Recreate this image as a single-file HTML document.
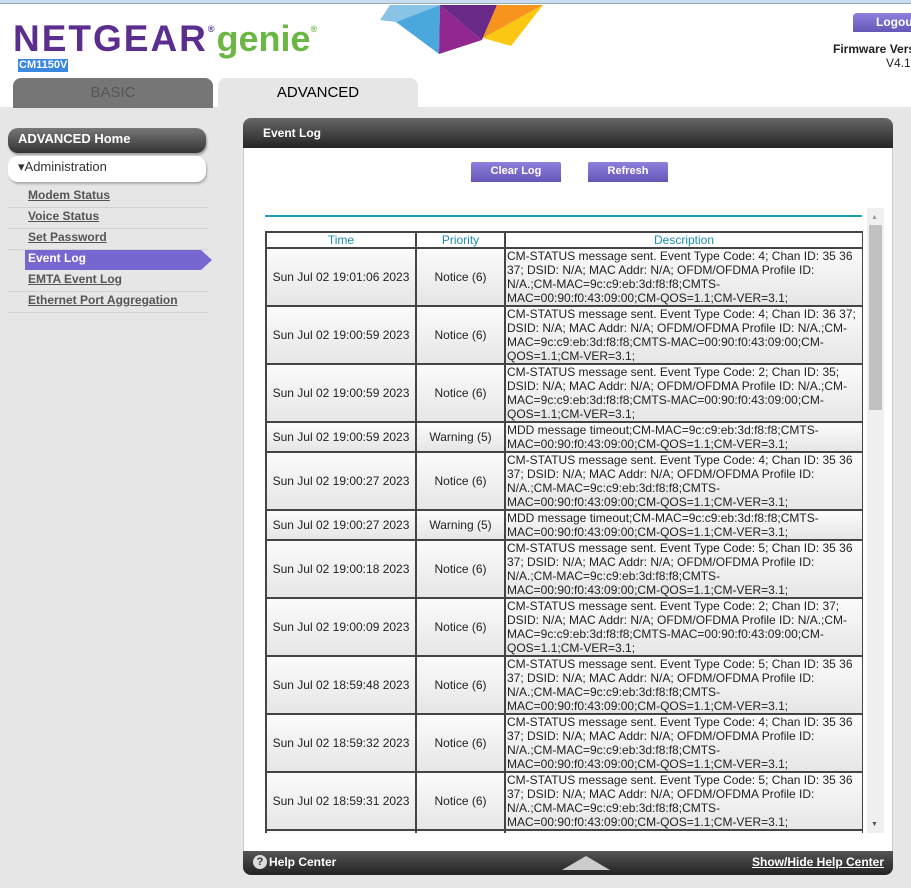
<!DOCTYPE html>
<html><head><meta charset="utf-8"><style>
*{margin:0;padding:0;box-sizing:border-box}
body{width:911px;height:888px;overflow:hidden;background:#e6e6e6;font-family:"Liberation Sans",Arial,sans-serif;position:relative;color:#222}
.abs{position:absolute}
#hdr{left:0;top:0;width:911px;height:107px;background:#fff}
#topbar{left:0;top:0;width:911px;height:4px;background:#c8dcf2;border-bottom:1px solid #9aa}
.logo{left:13px;top:18px;font-size:37px;font-weight:bold;color:#5b2d8e;letter-spacing:2px;white-space:nowrap}
.logo span{color:#6ab744;letter-spacing:0;font-size:36px;margin-left:2px}
.logo sup{font-size:9px;vertical-align:top;position:relative;top:6px;letter-spacing:0}
.model{left:18px;top:59px;font-size:11px;font-weight:bold;background:#3b88e0;color:#fff;padding:0 1px;line-height:13px}
.tab{top:78px;height:30px;border-radius:8px 8px 0 0;text-align:center;font-size:15px;line-height:30px}
.nav{left:8px;width:198px;border-radius:10px;font-size:13px}
.link{left:28px;font-size:12px;font-weight:bold;color:#555;text-decoration:underline}
.sep{left:8px;width:200px;height:1px;background:#d2d2d2}
.btn{top:162px;height:20px;background:linear-gradient(#8d80dc,#6356b8);color:#fff;font-size:11px;font-weight:bold;text-align:center;line-height:19px;border-radius:2px 2px 0 0}
table{border-collapse:collapse;width:597px;font-size:12px;table-layout:fixed}
td,th{border:2px solid #444;line-height:14px;padding:0 1px;white-space:nowrap}
th{color:#1e8fb0;font-weight:normal;height:16px;background:#fff;line-height:12px}
td{background:linear-gradient(#fbfbfb,#e6e6e6)}
td.c{text-align:center}
</style></head><body>
<div id="hdr" class="abs"></div>
<div id="topbar" class="abs"></div>
<svg class="abs" style="left:0;top:0" width="911" height="60">
<polygon points="390,5 440,5 396,22 380,20" fill="#89c4e6"/>
<polygon points="396,22 440,5 439,54" fill="#4aa8dc"/>
<polygon points="440,5 439,54 482,40" fill="#92278f"/>
<polygon points="440,5 497,5 482,40" fill="#682a86"/>
<polygon points="497,5 543,5 483,38" fill="#f7941d"/>
<polygon points="483,38 543,5 511,46" fill="#fcc712"/>
</svg>
<div class="abs logo">NETGEAR<sup>®</sup><span>genie<sup>®</sup></span></div>
<div class="abs model">CM1150V</div>
<div class="abs" style="left:853px;top:13px;width:70px;height:19px;background:linear-gradient(#8d80dc,#6356b8);border-radius:4px 0 0 0;color:#fff;font-size:12px;font-weight:bold;line-height:18px;padding-left:23px">Logout</div>
<div class="abs" style="left:833px;top:42px;font-size:12px;font-weight:bold;white-space:nowrap">Firmware Version</div>
<div class="abs" style="left:886px;top:56px;font-size:12px;white-space:nowrap">V4.12</div>
<div class="abs tab" style="left:13px;width:200px;background:#767676;color:#555">BASIC</div>
<div class="abs tab" style="left:218px;width:200px;background:#e6e6e6;color:#000">ADVANCED</div>

<div class="abs nav" style="top:128px;height:25px;background:linear-gradient(#777,#333);color:#fff;font-weight:bold;line-height:22px;padding-left:10px;box-shadow:1px 2px 2px #999">ADVANCED Home</div>
<div class="abs nav" style="top:156px;height:26px;background:#fff;color:#333;line-height:22px;padding-left:10px;box-shadow:1px 2px 2px #aaa">▾Administration</div>
<div class="abs" style="left:25px;top:250px;width:176px;height:20px;background:#7667d0"></div>
<div class="abs" style="left:201px;top:250px;width:0;height:0;border-top:10px solid transparent;border-bottom:10px solid transparent;border-left:11px solid #7667d0"></div>
<div class="abs link" style="top:188px">Modem Status</div>
<div class="abs sep" style="top:207px"></div>
<div class="abs link" style="top:209px">Voice Status</div>
<div class="abs sep" style="top:228px"></div>
<div class="abs link" style="top:230px">Set Password</div>
<div class="abs sep" style="top:249px"></div>
<div class="abs link" style="top:251px;color:#fff;text-decoration:none">Event Log</div>
<div class="abs link" style="top:272px">EMTA Event Log</div>
<div class="abs sep" style="top:291px"></div>
<div class="abs link" style="top:293px">Ethernet Port Aggregation</div>
<div class="abs sep" style="top:312px"></div>

<div class="abs" style="left:243px;top:118px;width:650px;height:31px;background:linear-gradient(#666,#222);border-radius:8px 8px 0 0;color:#fff;font-size:12px;font-weight:bold;padding:8px 0 0 20px">Event Log</div>
<div class="abs" style="left:243px;top:148px;width:650px;height:703px;background:#fff;border-left:1px solid #ccc;border-right:1px solid #ccc"></div>
<div class="abs btn" style="left:471px;width:90px">Clear Log</div>
<div class="abs btn" style="left:588px;width:80px">Refresh</div>
<div class="abs" style="left:265px;top:215px;width:597px;height:2px;background:#1a9bbb"></div>
<div class="abs" style="left:867px;top:208px;width:17px;height:625px;background:#f0f0f0"></div>
<div class="abs" style="left:869px;top:225px;width:13px;height:185px;background:#c1c1c1"></div>
<div class="abs" style="left:871px;top:214px;font-size:7px;color:#999">▲</div>
<div class="abs" style="left:871px;top:821px;font-size:7px;color:#555">▼</div>

<div class="abs" style="left:265px;top:231px;width:598px;height:602px;overflow:hidden">
<table>
<colgroup><col style="width:150px"><col style="width:89px"><col style="width:358px"></colgroup>
<tr><th>Time</th><th>Priority</th><th>Description</th></tr>
<tr><td class="c">Sun Jul 02 19:01:06 2023</td><td class="c">Notice (6)</td><td>CM-STATUS message sent. Event Type Code: 4; Chan ID: 35 36<br>37; DSID: N/A; MAC Addr: N/A; OFDM/OFDMA Profile ID:<br>N/A.;CM-MAC=9c:c9:eb:3d:f8:f8;CMTS-<br>MAC=00:90:f0:43:09:00;CM-QOS=1.1;CM-VER=3.1;</td></tr>
<tr><td class="c">Sun Jul 02 19:00:59 2023</td><td class="c">Notice (6)</td><td>CM-STATUS message sent. Event Type Code: 4; Chan ID: 36 37;<br>DSID: N/A; MAC Addr: N/A; OFDM/OFDMA Profile ID: N/A.;CM-<br>MAC=9c:c9:eb:3d:f8:f8;CMTS-MAC=00:90:f0:43:09:00;CM-<br>QOS=1.1;CM-VER=3.1;</td></tr>
<tr><td class="c">Sun Jul 02 19:00:59 2023</td><td class="c">Notice (6)</td><td>CM-STATUS message sent. Event Type Code: 2; Chan ID: 35;<br>DSID: N/A; MAC Addr: N/A; OFDM/OFDMA Profile ID: N/A.;CM-<br>MAC=9c:c9:eb:3d:f8:f8;CMTS-MAC=00:90:f0:43:09:00;CM-<br>QOS=1.1;CM-VER=3.1;</td></tr>
<tr><td class="c">Sun Jul 02 19:00:59 2023</td><td class="c">Warning (5)</td><td>MDD message timeout;CM-MAC=9c:c9:eb:3d:f8:f8;CMTS-<br>MAC=00:90:f0:43:09:00;CM-QOS=1.1;CM-VER=3.1;</td></tr>
<tr><td class="c">Sun Jul 02 19:00:27 2023</td><td class="c">Notice (6)</td><td>CM-STATUS message sent. Event Type Code: 4; Chan ID: 35 36<br>37; DSID: N/A; MAC Addr: N/A; OFDM/OFDMA Profile ID:<br>N/A.;CM-MAC=9c:c9:eb:3d:f8:f8;CMTS-<br>MAC=00:90:f0:43:09:00;CM-QOS=1.1;CM-VER=3.1;</td></tr>
<tr><td class="c">Sun Jul 02 19:00:27 2023</td><td class="c">Warning (5)</td><td>MDD message timeout;CM-MAC=9c:c9:eb:3d:f8:f8;CMTS-<br>MAC=00:90:f0:43:09:00;CM-QOS=1.1;CM-VER=3.1;</td></tr>
<tr><td class="c">Sun Jul 02 19:00:18 2023</td><td class="c">Notice (6)</td><td>CM-STATUS message sent. Event Type Code: 5; Chan ID: 35 36<br>37; DSID: N/A; MAC Addr: N/A; OFDM/OFDMA Profile ID:<br>N/A.;CM-MAC=9c:c9:eb:3d:f8:f8;CMTS-<br>MAC=00:90:f0:43:09:00;CM-QOS=1.1;CM-VER=3.1;</td></tr>
<tr><td class="c">Sun Jul 02 19:00:09 2023</td><td class="c">Notice (6)</td><td>CM-STATUS message sent. Event Type Code: 2; Chan ID: 37;<br>DSID: N/A; MAC Addr: N/A; OFDM/OFDMA Profile ID: N/A.;CM-<br>MAC=9c:c9:eb:3d:f8:f8;CMTS-MAC=00:90:f0:43:09:00;CM-<br>QOS=1.1;CM-VER=3.1;</td></tr>
<tr><td class="c">Sun Jul 02 18:59:48 2023</td><td class="c">Notice (6)</td><td>CM-STATUS message sent. Event Type Code: 5; Chan ID: 35 36<br>37; DSID: N/A; MAC Addr: N/A; OFDM/OFDMA Profile ID:<br>N/A.;CM-MAC=9c:c9:eb:3d:f8:f8;CMTS-<br>MAC=00:90:f0:43:09:00;CM-QOS=1.1;CM-VER=3.1;</td></tr>
<tr><td class="c">Sun Jul 02 18:59:32 2023</td><td class="c">Notice (6)</td><td>CM-STATUS message sent. Event Type Code: 4; Chan ID: 35 36<br>37; DSID: N/A; MAC Addr: N/A; OFDM/OFDMA Profile ID:<br>N/A.;CM-MAC=9c:c9:eb:3d:f8:f8;CMTS-<br>MAC=00:90:f0:43:09:00;CM-QOS=1.1;CM-VER=3.1;</td></tr>
<tr><td class="c">Sun Jul 02 18:59:31 2023</td><td class="c">Notice (6)</td><td>CM-STATUS message sent. Event Type Code: 5; Chan ID: 35 36<br>37; DSID: N/A; MAC Addr: N/A; OFDM/OFDMA Profile ID:<br>N/A.;CM-MAC=9c:c9:eb:3d:f8:f8;CMTS-<br>MAC=00:90:f0:43:09:00;CM-QOS=1.1;CM-VER=3.1;</td></tr>
<tr><td class="c">Sun Jul 02 18:59:31 2023</td><td class="c">Warning (5)</td><td>MDD message timeout;CM-MAC=9c:c9:eb:3d:f8:f8;CMTS-<br>MAC=00:90:f0:43:09:00;CM-QOS=1.1;CM-VER=3.1;</td></tr>
</table>
</div>

<div class="abs" style="left:243px;top:851px;width:650px;height:24px;background:linear-gradient(#555,#222);border-radius:0 0 8px 8px"></div>
<div class="abs" style="left:253px;top:855px;width:14px;height:14px;border-radius:50%;background:#ddd;color:#333;font-size:11px;font-weight:bold;text-align:center;line-height:14px">?</div>
<div class="abs" style="left:269px;top:855px;color:#fff;font-size:12px;font-weight:bold">Help Center</div>
<div class="abs" style="left:562px;top:856px;width:0;height:0;border-left:24px solid transparent;border-right:24px solid transparent;border-bottom:14px solid #ccc"></div>
<div class="abs" style="left:752px;top:855px;color:#fff;font-size:12px;font-weight:bold;text-decoration:underline">Show/Hide Help Center</div>
</body></html>
